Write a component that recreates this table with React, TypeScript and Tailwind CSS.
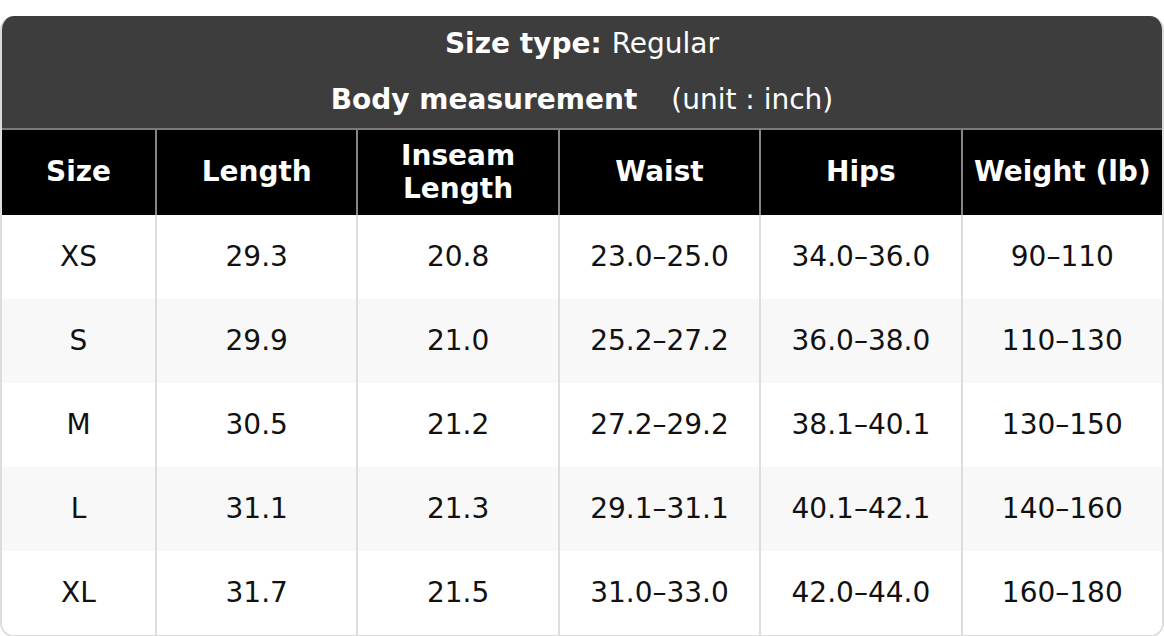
import React from 'react';

const headers = ['Size', 'Length', 'Inseam Length', 'Waist', 'Hips', 'Weight (lb)'];

const rows = [
  ['XS', '29.3', '20.8', '23.0–25.0', '34.0–36.0', '90–110'],
  ['S', '29.9', '21.0', '25.2–27.2', '36.0–38.0', '110–130'],
  ['M', '30.5', '21.2', '27.2–29.2', '38.1–40.1', '130–150'],
  ['L', '31.1', '21.3', '29.1–31.1', '40.1–42.1', '140–160'],
  ['XL', '31.7', '21.5', '31.0–33.0', '42.0–44.0', '160–180'],
];

const App: React.FC = () => {
  return (
    <div className="w-[1164px] h-[636px] bg-white pt-[16px] font-['DejaVu_Sans',sans-serif] text-[28px]">
      <div className="overflow-hidden rounded-[14px] border-2 border-t-0 border-[#dcdcdc]">
        {/* title block */}
        <div className="bg-[#3d3d3d] text-white">
          <div className="h-[56px] flex items-center justify-center">
            <span className="font-bold">Size type:</span>
            <span className="ml-[10px]">Regular</span>
          </div>
          <div className="h-[56px] flex items-center justify-center">
            <span className="font-bold">Body measurement</span>
            <span className="ml-[34px]">(unit : inch)</span>
          </div>
        </div>

        {/* header row */}
        <div className="grid grid-cols-[153px_repeat(5,1fr)] bg-black text-white font-bold border-t-2 border-[#7a7a7a]">
          {headers.map((h, i) => (
            <div
              key={h}
              className={
                'h-[85px] flex items-center justify-center text-center leading-[1.15] px-1 ' +
                (i > 0 ? 'border-l-2 border-[#858585]' : '')
              }
            >
              {h === 'Inseam Length' ? (
                <span>
                  Inseam
                  <br />
                  Length
                </span>
              ) : (
                h
              )}
            </div>
          ))}
        </div>

        {/* body rows */}
        {rows.map((r, ri) => (
          <div
            key={r[0]}
            className={
              'grid grid-cols-[153px_repeat(5,1fr)] text-[#111111] ' +
              (ri % 2 === 1 ? 'bg-[#f8f8f8]' : 'bg-white')
            }
          >
            {r.map((c, ci) => (
              <div
                key={ci}
                className={
                  'h-[84px] flex items-center justify-center ' +
                  (ci > 0 ? 'border-l-2 border-[#dddddd]' : '')
                }
              >
                {c}
              </div>
            ))}
          </div>
        ))}
      </div>
    </div>
  );
};

export default App;
